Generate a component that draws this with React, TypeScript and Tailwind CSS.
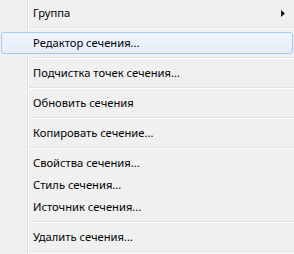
import React from "react";

type Entry = { label: string; hover?: boolean; sub?: boolean };

const groups: Entry[][] = [
  [{ label: "Группа", sub: true }],
  [{ label: "Редактор сечения...", hover: true }],
  [{ label: "Подчистка точек сечения..." }],
  [{ label: "Обновить сечения" }],
  [{ label: "Копировать сечение..." }],
  [
    { label: "Свойства сечения..." },
    { label: "Стиль сечения..." },
    { label: "Источник сечения..." },
  ],
  [{ label: "Удалить сечения..." }],
];

function Item({ e }: { e: Entry }) {
  if (e.hover) {
    return (
      <div className="relative mx-[1px] flex h-[22px] items-center rounded-[3px] border border-[#a9c8f0] bg-gradient-to-b from-[#f2f6fc] to-[#e4edf9] pl-[31px] text-black">
        {e.label}
      </div>
    );
  }
  return (
    <div className="relative flex h-[22px] items-center justify-between pl-[33px] pr-[9px] text-black">
      <span>{e.label}</span>
      {e.sub && (
        <svg width="4" height="7" viewBox="0 0 4 7">
          <path d="M0 0 L4 3.5 L0 7 Z" fill="#1a1a1a" />
        </svg>
      )}
    </div>
  );
}

function Sep() {
  return (
    <div className="relative ml-[29px] flex h-[8px] flex-col justify-center">
      <div className="h-[1px] bg-[#e0e0e0]" />
      <div className="h-[1px] bg-white" />
    </div>
  );
}

export default function App() {
  return (
    <div
      className="relative h-[254px] w-[294px] overflow-hidden bg-[#f0f0f0] pt-[2px] text-[11.2px]"
      style={{ fontFamily: '"Noto Sans", "Liberation Sans", sans-serif' }}
    >
      <div className="absolute inset-y-0 left-[27px] w-[2px] border-l border-[#e2e3e3] bg-white" />
      {groups.map((g, i) => (
        <React.Fragment key={i}>
          {i > 0 && <Sep />}
          {g.map((e) => (
            <Item key={e.label} e={e} />
          ))}
        </React.Fragment>
      ))}
      <Sep />
    </div>
  );
}
